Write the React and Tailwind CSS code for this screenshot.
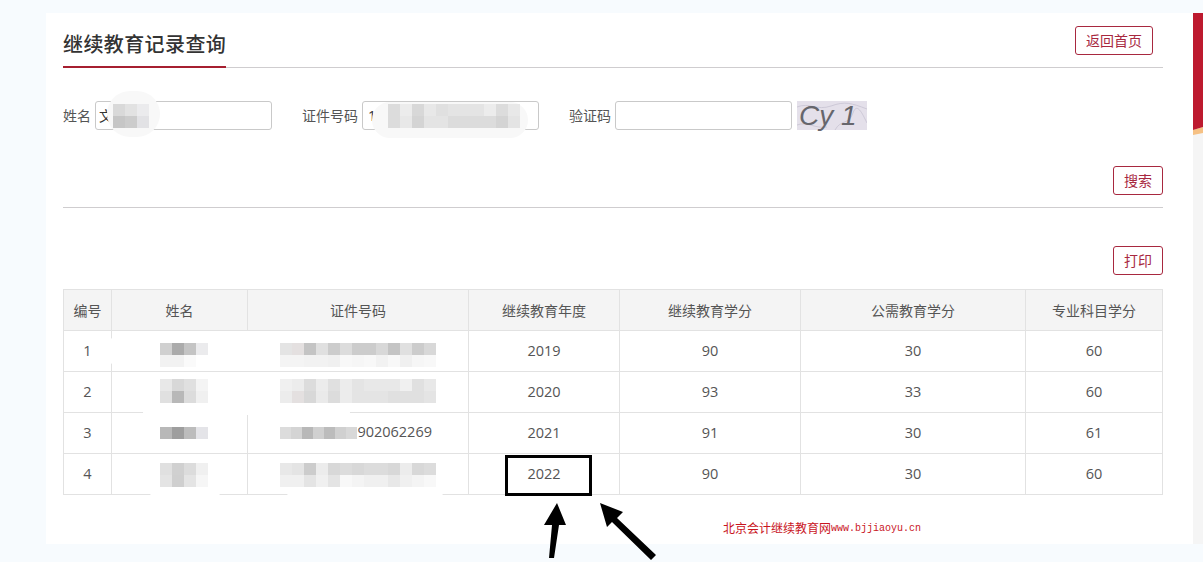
const cjk = { fontFamily: '"Open Sans","Noto Sans CJK SC",sans-serif' };

function Mosaic({ rows, cell = 12, h }) {
  const cols = Math.max(...rows.map((r) => r.length));
  const ch = h || cell;
  return (
    <svg className="relative z-10 block shrink-0" width={cols * cell} height={rows.length * ch}>
      {rows.map((r, j) =>
        r.map((c, i) => <rect key={i} x={i * cell} y={j * ch} width={cell} height={ch} fill={"#" + c} />)
      )}
    </svg>
  );
}

function Smudge({ x, y, w, h, color = "#ffffff", radius = 18 }) {
  return <div className="absolute" style={{ left: x, top: y, width: w, height: h, background: color, borderRadius: radius }} />;
}

function Btn({ children, className = "" }) {
  return (
    <button className={"h-[29px] rounded-[3px] border border-[#a8283f] bg-white text-[14px] leading-[27px] text-[#a8283f] " + className}>
      {children}
    </button>
  );
}

const cols = ["w-[48px]", "w-[136px]", "w-[221px]", "w-[151px]", "w-[181px]", "w-[225px]", "w-[137px]"];
const heads = ["编号", "姓名", "证件号码", "继续教育年度", "继续教育学分", "公需教育学分", "专业科目学分"];
const rows = [
  {
    n: "1", y: "2019", a: "90", b: "30", c: "60", pad: "pt-[12px]",
    name: [["d0d0d0", "ababab", "c4c4c4", "ebebed"], ["f2f2f2", "f2f2f2", "fafafa", "ffffff"]],
    id: [
      ["e4e4e4", "e4e0e0", "c4c4c4", "e0e0e0", "cccccc", "dcdcdc", "cccccc", "cccccc", "d8d8d8", "c4c4c4", "e0e0e0", "cccccc", "d8d8d8"],
      ["f4f4f4", "f4f4f4", "f2f2f2", "f2f2f2", "f0f0f0", "f8f8f8", "f6f6f6", "f8f8f8", "f2f2f2", "f8f8f8", "f0f0f0", "f6f6f6", "f8f8f8"],
    ],
  },
  {
    n: "2", y: "2020", a: "93", b: "33", c: "60", pad: "pt-[7px]",
    name: [["e8e8e8", "d8d8d8", "e0e0e0", "f4f4f4"], ["e0e0e0", "b8b8b8", "dcdcdc", "f0f0f0"]],
    id: [
      ["f0f0f0", "ececec", "dcdcdc", "ececec", "e0e0e0", "ececec", "e4e4e4", "e8e8e8", "e8e8e8", "e8e8e8", "f0f0f0", "e0e0e0", "e8e8e8"],
      ["ececec", "e4e0e0", "d8d8d8", "eaeaea", "dcdcdc", "ececec", "e4e4e4", "e4e4e4", "e4e4e4", "e0e0e0", "e0e0e0", "e0e0e0", "e4e4e4"],
    ],
  },
  {
    n: "3", y: "2021", a: "91", b: "30", c: "61", pad: "pt-[14px]",
    name: [["b8b8b8", "9e9e9e", "bcbcbc", "e4e4e8"]],
    id: [["dcdcdc", "d4d4d4", "b8b8b8", "d0d0d0", "bcbcbc", "d0d0d0", "d8d8d8"]],
    cell: 11,
    tail: "902062269",
  },
  {
    n: "4", y: "2022", a: "90", b: "30", c: "60", pad: "pt-[9px]",
    name: [["e0e0e0", "d0d0d0", "dcdcdc", "f0f0f0"], ["e4e4e4", "cfcfcf", "e4e4e4", "f6f6f6"]],
    id: [
      ["e8e8e8", "e4e4e4", "cccccc", "ececec", "d8d8d8", "dcdcdc", "d8d8d8", "dcdcdc", "dcdcdc", "d8d8d8", "ececec", "d8d8d8", "dcdcdc"],
      ["f0f0f0", "f0f0f0", "e4e4e4", "f0f0f0", "e4e4e4", "f8f8f8", "f4f4f4", "f0f0f0", "f0f0f0", "e8e8e8", "f0f0f0", "f4f4f4", "f8f8f8"],
    ],
  },
];

const numCell = "border border-[#e2e2e2] p-0 pb-[1px] text-[14.5px]";
const blankCell = "border border-[#e2e2e2] p-0 align-top";

export default function App() {
  return (
    <div className="relative h-[562px] w-[1203px] overflow-hidden bg-[#f7fbfe] pt-[13px]" style={cjk}>
      <div className="flex h-[531px]">
        <div className="ml-[46px] w-[1147px] bg-white pl-[17px] pr-[30px]">
          <div className="flex h-[55px] items-start justify-between border-b border-[#cfcdcf]">
            <h1 className="h-[55px] border-b-2 border-[#a61f30] pt-[15px] text-[20px] font-medium leading-[33px] tracking-[0.4px] text-[#333]">
              继续教育记录查询
            </h1>
            <Btn className="mr-[10px] mt-[13px] w-[78px]">返回首页</Btn>
          </div>

          <div className="mt-[33px] flex h-[29px] items-center text-[14px] text-[#555]">
            <label className="w-[32px]">姓名</label>
            <div className="flex h-[29px] w-[177px] items-center rounded-[3px] border border-[#c9c9c9] bg-white pl-[3px] text-[#333]">
              <span>文</span>
              <Mosaic rows={[["d9d9d9", "e2e2e2", "ebebed"], ["c6c6c6", "cccccc", "e2e2e5"]]} />
            </div>
            <label className="ml-[30px] w-[60px]">证件号码</label>
            <div className="flex h-[29px] w-[177px] items-center rounded-[3px] border border-[#c9c9c9] bg-white pl-[5px] text-[#333]">
              <span className="w-[20px]">1</span>
              <Mosaic
                rows={[
                  ["dcdcdc", "ececec", "d8d8d8", "e8e8e8", "e0e0e0", "e4e4e4", "e4e4e4", "e4e4e4", "ececec", "dcdcdc", "e8e8e8"],
                  ["dcdcdc", "e8e8e8", "d4d4d4", "e4e4e4", "e4e4e4", "dcdcdc", "dcdcdc", "dcdcdc", "dcdcdc", "d4d4d4", "e4e4e4"],
                ]}
              />
            </div>
            <label className="ml-[30px] w-[46px]">验证码</label>
            <div className="h-[29px] w-[177px] rounded-[3px] border border-[#c9c9c9] bg-white" />
            <div
              className="relative ml-[5px] h-[29px] w-[70px] bg-[#e4e0ea] pl-[2px] text-[28px] italic leading-[29px] text-[#66666c]"
              style={{ fontFamily: '"Liberation Sans",sans-serif' }}
            >
              <svg className="absolute left-0 top-0" width="70" height="29" fill="none" stroke="#c3bfce" strokeWidth="0.7">
                <path d="M0 6 C12 1 20 10 34 5 S54 2 70 8" />
                <path d="M38 29 C44 18 52 24 56 12 S66 14 70 22" />
                <path d="M0 24 C10 20 18 28 30 26" />
              </svg>
              <span className="relative">Cy 1</span>
            </div>
          </div>

          <div className="mt-[36px] flex justify-end">
            <Btn className="w-[50px]">搜索</Btn>
          </div>
          <div className="mt-[12px] h-px bg-[#cfcdcf]" />
          <div className="mt-[38px] flex justify-end">
            <Btn className="w-[50px]">打印</Btn>
          </div>

          <table className="mt-[14px] w-[1099px] table-fixed border-collapse border border-[#e2e2e2] text-center text-[14px] text-[#555]">
            <colgroup>
              {cols.map((c) => (
                <col key={c} className={c} />
              ))}
            </colgroup>
            <thead>
              <tr className="h-[41px] bg-[#f4f4f4]">
                {heads.map((h) => (
                  <th key={h} className="border border-[#e2e2e2] p-0 font-normal">
                    {h}
                  </th>
                ))}
              </tr>
            </thead>
            <tbody>
              {rows.map((r) => (
                <tr key={r.n} className="h-[41px]">
                  <td className={numCell}>{r.n}</td>
                  <td className={blankCell}>
                    <div className={"pl-[48px] " + r.pad}>
                      <Mosaic rows={r.name} />
                    </div>
                  </td>
                  <td className={blankCell}>
                    <div className={"flex items-center justify-between pl-[32px] pr-[36px] text-[14.5px] " + r.pad}>
                      <Mosaic rows={r.id} cell={r.cell || 12} h={12} />
                      {r.tail ? <span className="relative z-10 -mt-[2px] leading-[12px]">{r.tail}</span> : null}
                    </div>
                  </td>
                  <td className={numCell}>{r.y}</td>
                  <td className={numCell}>{r.a}</td>
                  <td className={numCell}>{r.b}</td>
                  <td className={numCell}>{r.c}</td>
                </tr>
              ))}
            </tbody>
          </table>

          <div className="ml-[660px] mt-[25px] flex h-[16px] items-center whitespace-nowrap text-[12px] text-[#c9151e]">
            <span style={{ fontFamily: '"Noto Sans CJK SC",sans-serif' }}>北京会计继续教育网</span>
            <span className="text-[10px]" style={{ fontFamily: '"Liberation Mono",monospace' }}>www.bjjiaoyu.cn</span>
          </div>
        </div>
        <div className="flex w-[10px] flex-col bg-[#f5f5f5]">
          <div className="h-[114px] bg-[#bd1a2f]" />
          <svg width="10" height="8" className="block">
            <polygon points="0,3 10,0 10,6 0,8" fill="#f6c184" />
            <polygon points="0,0 10,0 0,3" fill="#bd1a2f" />
          </svg>
        </div>
      </div>

      {/* redaction smudges lying over the form and the table lines */}
      <Smudge x={107} y={91} w={53} h={46} color="#f8f8f8" radius={23} />
      <Smudge x={372} y={102} w={156} h={36} color="#f8f8f8" />
      <Smudge x={108} y={331} w={345} h={40} />
      <Smudge x={145} y={372} w={310} h={39} />
      <Smudge x={143} y={409} w={207} h={6} radius={3} />
      <Smudge x={143} y={456} w={84} h={42} />
      <Smudge x={280} y={456} w={170} h={42} />

      {/* annotations drawn over the screenshot */}
      <div className="absolute left-[505px] top-[455px] z-20 h-[41px] w-[87px] border-[3px] border-black" />
      <svg className="absolute left-0 top-0 z-20" width="1203" height="562" fill="#000" style={{ pointerEvents: "none" }}>
        <polygon points="557,503 566,525 559,525 554,558 549,558 552,525 544,525" />
        <polygon points="600,503 623,512 617,518 656,555 651,560 612,522 607,527" />
      </svg>
    </div>
  );
}
